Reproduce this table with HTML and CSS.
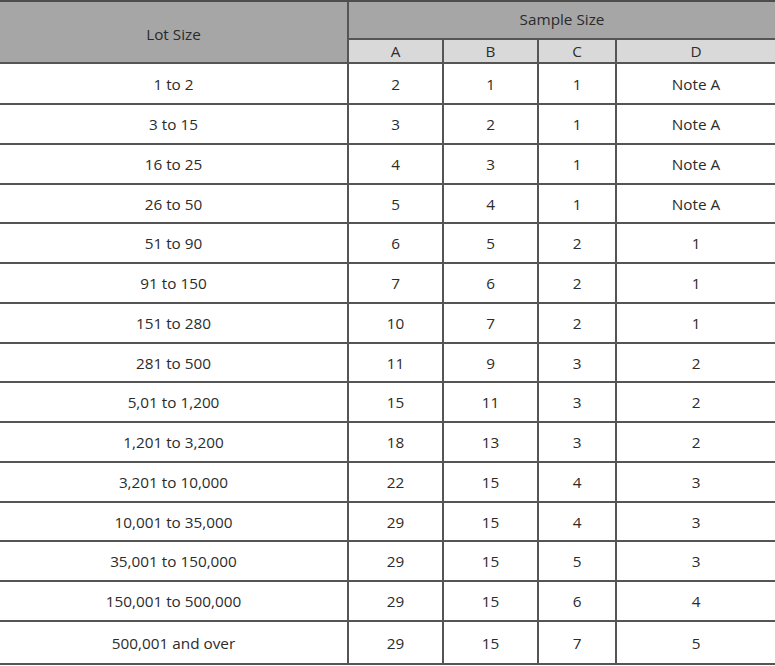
FILE: index.html
```html
<!DOCTYPE html>
<html>
<head>
<meta charset="utf-8">
<link rel="stylesheet" href="styles.css">
</head>
<body>
<table class="sampling">
  <colgroup>
    <col class="c-lot">
    <col class="c-a">
    <col class="c-b">
    <col class="c-c">
    <col class="c-d">
  </colgroup>
  <thead>
    <tr class="head-top">
      <th class="lot-head" rowspan="2">Lot Size</th>
      <th class="sample-head" colspan="4">Sample Size</th>
    </tr>
    <tr class="head-sub">
      <th>A</th>
      <th>B</th>
      <th>C</th>
      <th class="last">D</th>
    </tr>
  </thead>
  <tbody>
    <tr class="first"><td>1 to 2</td><td>2</td><td>1</td><td>1</td><td class="last">Note A</td></tr>
    <tr><td>3 to 15</td><td>3</td><td>2</td><td>1</td><td class="last">Note A</td></tr>
    <tr><td>16 to 25</td><td>4</td><td>3</td><td>1</td><td class="last">Note A</td></tr>
    <tr><td>26 to 50</td><td>5</td><td>4</td><td>1</td><td class="last">Note A</td></tr>
    <tr><td>51 to 90</td><td>6</td><td>5</td><td>2</td><td class="last">1</td></tr>
    <tr><td>91 to 150</td><td>7</td><td>6</td><td>2</td><td class="last">1</td></tr>
    <tr><td>151 to 280</td><td>10</td><td>7</td><td>2</td><td class="last">1</td></tr>
    <tr><td>281 to 500</td><td>11</td><td>9</td><td>3</td><td class="last">2</td></tr>
    <tr><td>5,01 to 1,200</td><td>15</td><td>11</td><td>3</td><td class="last">2</td></tr>
    <tr><td>1,201 to 3,200</td><td>18</td><td>13</td><td>3</td><td class="last">2</td></tr>
    <tr><td>3,201 to 10,000</td><td>22</td><td>15</td><td>4</td><td class="last">3</td></tr>
    <tr><td>10,001 to 35,000</td><td>29</td><td>15</td><td>4</td><td class="last">3</td></tr>
    <tr><td>35,001 to 150,000</td><td>29</td><td>15</td><td>5</td><td class="last">3</td></tr>
    <tr><td>150,001 to 500,000</td><td>29</td><td>15</td><td>6</td><td class="last">4</td></tr>
    <tr class="final"><td>500,001 and over</td><td>29</td><td>15</td><td>7</td><td class="last">5</td></tr>
  </tbody>
</table>
</body>
</html>
```
FILE: styles.css
```css
html, body {
  margin: 0;
  padding: 0;
  background: #ffffff;
}

.sampling {
  width: 775px;
  table-layout: fixed;
  border-collapse: separate;
  border-spacing: 0;
  border-top: 2px solid #4d4d4d;
  font-family: "Open Sans", "Noto Sans", sans-serif;
  font-size: 15.3px;
  color: #2b2b2b;
}

.c-lot { width: 349px; }
.c-a { width: 95px; }
.c-b { width: 95px; }
.c-c { width: 78px; }
.c-d { width: 158px; }

.sampling th,
.sampling td {
  padding: 2px 0 0 0;
  text-align: center;
  vertical-align: middle;
  font-weight: normal;
  border-right: 2px solid #555555;
  border-bottom: 2px solid #555555;
  box-sizing: border-box;
  line-height: 1;
}

.sampling .last {
  border-right: none;
}

.head-top {
  height: 38px;
}

.head-top th {
  background: #a6a6a6;
  color: #2a2a2a;
  padding-top: 0;
}

.head-top .lot-head {
  padding-top: 5px;
}

.sample-head {
  border-right: none !important;
}

.head-sub {
  height: 24px;
}

.head-sub th {
  background: #d9d9d9;
  color: #2e2e2e;
}

.sampling tbody tr {
  height: 39.75px;
}

.sampling tbody tr.first {
  height: 41px;
}

.sampling tbody tr.final {
  height: 43px;
}
```
